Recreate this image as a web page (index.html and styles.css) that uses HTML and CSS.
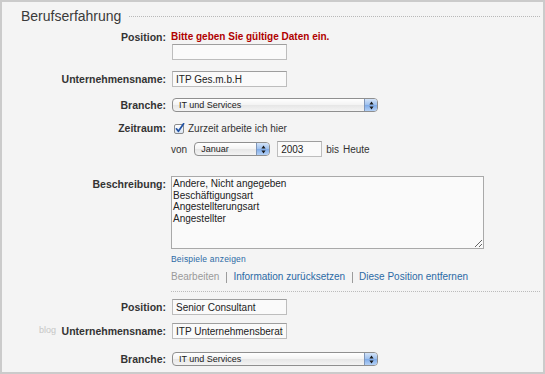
FILE: index.html
```html
<!DOCTYPE html>
<html lang="de">
<head>
    <meta charset="UTF-8">
    <meta name="viewport" content="width=device-width, initial-scale=1.0">
    <title>Berufserfahrung</title>
    <link rel="stylesheet" href="styles.css">
</head>
<body>
    <div class="frame">
        <span class="watermark">blog</span>

        <div class="section-head">
            <h2>Berufserfahrung</h2>
            <span class="rule"></span>
        </div>

        <!-- first position -->
        <div class="row row-error">
            <label class="label" for="pos-1">Position:</label>
            <div class="field">
                <div class="error">Bitte geben Sie gültige Daten ein.</div>
                <input class="text" type="text" id="pos-1">
            </div>
        </div>

        <div class="row row-gap">
            <label class="label" for="company-1">Unternehmensname:</label>
            <div class="field">
                <input class="text" type="text" id="company-1" value="ITP Ges.m.b.H">
            </div>
        </div>

        <div class="row row-gap">
            <span class="label">Branche:</span>
            <div class="field">
                <div class="popup popup-wide">
                    <span class="popup-text">IT und Services</span>
                    <span class="popup-arrows">
                        <svg width="5" height="9" viewBox="0 0 5 9"><path d="M2.5 0.6 L4.6 3.6 H0.4 Z M2.5 8.4 L4.6 5.4 H0.4 Z" fill="#1b1b1b"/></svg>
                    </span>
                </div>
            </div>
        </div>

        <div class="row row-gap row-top">
            <span class="label">Zeitraum:</span>
            <div class="field">
                <div class="check-line">
                    <svg class="checkbox" width="11" height="11" viewBox="0 0 11 11">
                        <defs>
                            <linearGradient id="cb" x1="0" y1="0" x2="0" y2="1">
                                <stop offset="0" stop-color="#ffffff"/>
                                <stop offset="1" stop-color="#d9e4f2"/>
                            </linearGradient>
                        </defs>
                        <rect x="0.5" y="1.5" width="9" height="9" rx="1.5" fill="url(#cb)" stroke="#8c8c8c"/>
                        <path d="M2.4 5.8 L4.4 8.3 L9.6 0.8" fill="none" stroke="#2152a3" stroke-width="1.7" stroke-linecap="round" stroke-linejoin="round"/>
                    </svg>
                    <span>Zurzeit arbeite ich hier</span>
                </div>
                <div class="period-line">
                    <span>von</span>
                    <div class="popup popup-month">
                        <span class="popup-text">Januar</span>
                        <span class="popup-arrows">
                            <svg width="5" height="9" viewBox="0 0 5 9"><path d="M2.5 0.6 L4.6 3.6 H0.4 Z M2.5 8.4 L4.6 5.4 H0.4 Z" fill="#1b1b1b"/></svg>
                        </span>
                    </div>
                    <input class="text text-year" type="text" value="2003">
                    <span class="bis">bis</span>
                    <span class="heute">Heute</span>
                </div>
            </div>
        </div>

        <div class="row row-desc row-top">
            <label class="label label-desc" for="desc-1">Beschreibung:</label>
            <div class="field">
                <textarea id="desc-1" class="desc">Andere, Nicht angegeben
Beschäftigungsart
Angestellterungsart
Angestellter</textarea>
                <div class="hint"><a href="#">Beispiele anzeigen</a></div>
                <div class="actions">
                    <span class="muted">Bearbeiten</span>
                    <span class="sep"></span>
                    <a href="#">Information zurücksetzen</a>
                    <span class="sep"></span>
                    <a href="#">Diese Position entfernen</a>
                </div>
                <div class="rule-line"></div>
            </div>
        </div>

        <!-- second position -->
        <div class="row row-next-1">
            <label class="label" for="pos-2">Position:</label>
            <div class="field">
                <input class="text" type="text" id="pos-2" value="Senior Consultant">
            </div>
        </div>

        <div class="row row-next-2">
            <label class="label" for="company-2">Unternehmensname:</label>
            <div class="field">
                <input class="text" type="text" id="company-2" value="ITP Unternehmensberatung">
            </div>
        </div>

        <div class="row row-next-3">
            <span class="label">Branche:</span>
            <div class="field">
                <div class="popup popup-wide">
                    <span class="popup-text">IT und Services</span>
                    <span class="popup-arrows">
                        <svg width="5" height="9" viewBox="0 0 5 9"><path d="M2.5 0.6 L4.6 3.6 H0.4 Z M2.5 8.4 L4.6 5.4 H0.4 Z" fill="#1b1b1b"/></svg>
                    </span>
                </div>
            </div>
        </div>
    </div>
</body>
</html>
```

FILE: styles.css
```css
body {
    margin: 0;
    font-family: "Liberation Sans", Arial, sans-serif;
}
.frame {
    position: relative;
    width: 545px;
    height: 374px;
    box-sizing: border-box;
    border: 2px solid #cbcbcb;
    background-color: #f4f4f4;
    padding: 6px 3px 0 0;
    overflow: hidden;
    color: #333;
    font-size: 10px;
}
.watermark {
    position: absolute;
    left: 37px;
    top: 323px;
    font-size: 9px;
    line-height: 10px;
    color: #c6c6c6;
}
.section-head {
    display: flex;
    align-items: center;
    height: 16px;
    padding-left: 19px;
}
.section-head h2 {
    margin: 0;
    font-size: 14px;
    font-weight: normal;
    line-height: 16px;
    color: #3a3a3a;
}
.rule {
    flex: 1;
    margin-left: 8px;
    border-top: 1px dotted #b8b8b8;
}
.row {
    display: flex;
    align-items: center;
}
.row-top {
    align-items: flex-start;
}
.row-error {
    align-items: flex-start;
    margin-top: 8px;
}
.row-gap {
    margin-top: 11px;
}
.row-desc {
    margin-top: 19px;
}
.row-next-1 {
    margin-top: 7px;
}
.row-next-2 {
    margin-top: 8px;
}
.row-next-3 {
    margin-top: 13px;
}
.label {
    flex: none;
    width: 169px;
    padding-right: 5px;
    box-sizing: border-box;
    text-align: right;
    font-size: 10.5px;
    font-weight: bold;
    line-height: 11px;
    color: #333;
}
.row-error .label {
    line-height: 10px;
}
.label-desc {
    padding-top: 3px;
}
.field {
    flex: 1;
    min-width: 0;
}
.error {
    color: #b00000;
    font-weight: bold;
    font-size: 10px;
    line-height: 10px;
}
.row-error .text {
    margin-top: 2px;
}
.text {
    display: block;
    width: 115px;
    height: 16px;
    margin: 0 0 0 1px;
    padding: 0 3px;
    box-sizing: border-box;
    border: 1px solid #bdbdbd;
    border-top-color: #9e9e9e;
    background-color: #fafafa;
    font-family: "Liberation Sans", Arial, sans-serif;
    font-size: 10px;
    color: #222;
    outline: none;
}
.popup {
    display: flex;
    align-items: center;
    height: 14px;
    box-sizing: border-box;
    margin-left: 1px;
    border: 1px solid #8f8f8f;
    border-radius: 4px;
    background: linear-gradient(#ffffff, #f3f3f3 50%, #e6e6e6 51%, #f4f4f4);
    overflow: hidden;
    font-size: 9px;
    color: #222;
}
.popup-wide {
    width: 206px;
}
.popup-month {
    width: 76px;
    margin-left: 7px;
}
.popup-text {
    flex: 1;
    padding-left: 6px;
    line-height: 12px;
    white-space: nowrap;
}
.popup-arrows {
    display: flex;
    align-items: center;
    justify-content: center;
    width: 12px;
    align-self: stretch;
    border-left: 1px solid #8096b8;
    background: linear-gradient(#d3e3f8, #9dc0ee 50%, #7eaae8 51%, #b4d1f6);
}
.check-line {
    display: flex;
    align-items: center;
    height: 11px;
}
.checkbox {
    margin-left: 3px;
}
.check-line span {
    margin-left: 3px;
    line-height: 11px;
}
.period-line {
    display: flex;
    align-items: center;
    height: 16px;
    margin-top: 7px;
}
.text-year {
    width: 45px;
    margin-left: 7px;
}
.bis {
    margin-left: 4px;
}
.heute {
    margin-left: 4px;
}
.desc {
    display: block;
    width: 313px;
    height: 73px;
    margin: 0;
    padding: 1px 1px;
    box-sizing: border-box;
    border: 1px solid #a9a9a9;
    background-color: #fafafa;
    font-family: "Liberation Sans", Arial, sans-serif;
    font-size: 10px;
    line-height: 11.7px;
    color: #222;
    outline: none;
}
.hint {
    margin-top: 5px;
    font-size: 8.5px;
    line-height: 10px;
    letter-spacing: 0.2px;
}
a {
    color: #2b6aa5;
    text-decoration: none;
}
.actions {
    display: flex;
    align-items: center;
    margin-top: 7px;
    line-height: 12px;
}
.muted {
    color: #9a9a9a;
}
.sep {
    width: 1px;
    height: 11px;
    margin: 0 6px 0 7px;
    background-color: #9c9c9c;
}
.rule-line {
    margin-top: 8px;
    border-top: 1px dotted #bbbbbb;
}
```
